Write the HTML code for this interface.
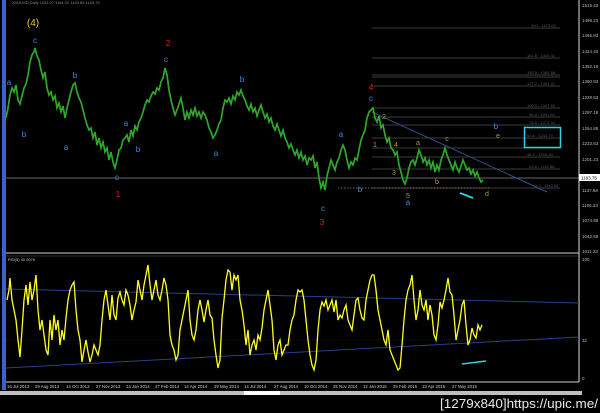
<!DOCTYPE html>
<html><head><meta charset="utf-8"><style>
html,body{margin:0;padding:0;background:#000;width:600px;height:413px;overflow:hidden}
svg{display:block}
text{font-family:"Liberation Sans",sans-serif}
</style></head><body>
<svg width="600" height="413" viewBox="0 0 600 413">
<rect width="600" height="413" fill="#000"/>
<rect x="2" y="0" width="4" height="390" fill="#3a63c8"/>
<line x1="579" y1="0" x2="579" y2="382" stroke="#ddd" stroke-width="1"/>
<g fill="#bbb" font-size="4.5">
<text x="582" y="7">1515.40</text><text x="582" y="22">1498.23</text><text x="582" y="37">1465.83</text>
<text x="582" y="53">1424.40</text><text x="582" y="68">1392.18</text><text x="582" y="83">1360.83</text>
<text x="582" y="99">1328.53</text><text x="582" y="114">1297.18</text><text x="582" y="130">1264.88</text>
<text x="582" y="145">1233.53</text><text x="582" y="161">1201.23</text><text x="582" y="192">1137.58</text>
<text x="582" y="207">1106.23</text><text x="582" y="222">1074.88</text><text x="582" y="238">1042.58</text><text x="582" y="253">1011.23</text>
<text x="582" y="261">100</text><text x="582" y="342">32</text><text x="582" y="380">0</text>
</g>
<rect x="579" y="174" width="21" height="7" fill="#fff"/>
<text x="581" y="179.5" font-size="4.5" fill="#000">1163.75</text>
<text x="12" y="4" font-size="4" fill="#888">XAUUSD,Daily 1163.07 1164.02 1163.65 1163.75</text>
<g stroke="#777" stroke-width="0.6">
<line x1="372" y1="28" x2="560" y2="28"/><line x1="372" y1="58" x2="560" y2="58"/>
<line x1="372" y1="75" x2="560" y2="75"/><line x1="372" y1="77" x2="560" y2="77"/>
<line x1="372" y1="86" x2="560" y2="86"/><line x1="372" y1="108" x2="560" y2="108"/>
<line x1="372" y1="117" x2="560" y2="117"/><line x1="372" y1="125" x2="560" y2="125"/>
<line x1="372" y1="138" x2="560" y2="138"/><line x1="372" y1="148" x2="560" y2="148"/>
<line x1="372" y1="157" x2="560" y2="157"/><line x1="372" y1="169" x2="560" y2="169"/>
<line x1="372" y1="188" x2="560" y2="188"/>
</g>
<g fill="#556" font-size="4">
<text x="531" y="27">200 - 1473.02</text><text x="527" y="57">161.8 - 1405.02</text>
<text x="527" y="74">150.0 - 1385.58</text><text x="527" y="85">127.2 - 1351.47</text>
<text x="527" y="107">100.0 - 1307.53</text><text x="529" y="116">90.4 - 1291.65</text>
<text x="529" y="124">78.6 - 1272.30</text><text x="527" y="137">61.8 - 1244.70</text>
<text x="527" y="156">38.2 - 1205.80</text><text x="529" y="168">23.6 - 1181.88</text><text x="535" y="187">0.0 - 1143.33</text>
</g>
<rect x="524.5" y="127.5" width="36" height="20" fill="none" stroke="#2cd3e0" stroke-width="1.5"/>
<line x1="6" y1="178" x2="579" y2="178" stroke="#888" stroke-width="0.8"/>
<line x1="338" y1="188" x2="490" y2="188" stroke="#a08a40" stroke-width="0.7" stroke-dasharray="1.5,1.5"/>
<line x1="372" y1="112" x2="547" y2="192" stroke="#34508a" stroke-width="1"/>
<polyline fill="none" stroke="#2fa82a" stroke-width="1.7" points="6,118 8,108 10,95 12,88 14,92 16,85 18,100 20,104 22,96 24,88 26,84 28,75 30,62 32,55 34,52 35,48 37,56 39,60 41,70 43,78 45,72 47,88 49,95 51,92 53,100 55,96 57,108 59,103 61,112 63,106 65,118 67,108 69,100 71,92 73,85 75,83 77,92 79,98 81,102 83,110 85,118 87,125 89,130 91,128 93,138 95,132 97,145 99,138 101,148 103,142 105,152 107,148 109,160 111,152 113,162 115,168 117,160 119,150 121,148 123,140 125,138 127,135 129,142 131,130 133,136 135,126 137,130 139,122 141,118 143,112 145,105 147,100 149,102 151,96 153,92 155,94 157,88 159,90 161,82 163,78 165,68 167,75 169,90 171,100 173,108 175,115 177,110 179,104 181,98 183,108 185,120 187,112 189,118 191,110 193,115 195,108 197,116 199,112 201,118 203,112 205,115 207,120 209,128 211,132 213,138 215,135 217,130 219,124 221,120 223,108 225,100 227,102 229,98 231,104 233,96 235,100 237,92 239,95 241,90 243,96 245,100 247,106 249,110 251,104 253,112 255,108 257,116 259,110 261,105 263,112 265,118 267,114 269,122 271,118 273,126 275,130 277,124 279,130 281,136 283,130 285,138 287,142 289,148 291,144 293,150 295,155 297,150 299,158 301,152 303,160 305,156 307,165 309,158 311,160 313,156 315,168 317,162 319,178 321,188 323,182 325,190 327,176 329,168 331,160 333,165 335,170 337,162 339,158 341,150 343,145 345,150 347,160 349,168 351,162 353,165 355,158 357,160 359,150 361,140 363,135 365,130 367,118 369,112 371,110 373,108 375,118 377,122 379,116 381,128 383,125 385,135 387,142 389,138 391,148 393,150 395,155 397,152 399,165 401,172 403,180 405,184 407,178 409,168 411,162 413,160 415,165 417,158 419,150 421,155 423,162 425,158 427,165 429,160 431,168 433,162 435,172 437,165 439,170 441,160 443,155 445,148 447,155 449,160 451,165 453,170 455,162 457,168 459,172 461,166 463,160 465,165 467,170 469,168 471,174 473,170 475,176 477,172 479,178 481,182 483,180"/>
<g font-size="8" fill="#3b8ce0" text-anchor="middle">
<text x="9" y="85">a</text><text x="35" y="43">c</text><text x="24" y="137">b</text>
<text x="75" y="78">b</text><text x="66" y="150">a</text><text x="117" y="180">c</text>
<text x="126" y="126">a</text><text x="138" y="152">b</text><text x="166" y="62">c</text>
<text x="216" y="156">a</text><text x="242" y="82">b</text><text x="341" y="137">a</text>
<text x="360" y="192">b</text><text x="371" y="101">c</text><text x="323" y="211">c</text>
<text x="408" y="205">a</text><text x="496" y="129">b</text>
</g>
<g font-size="8" fill="#e02020" text-anchor="middle">
<text x="118" y="197">1</text><text x="168" y="46">2</text><text x="322" y="225">3</text><text x="371" y="90">4</text>
</g>
<text x="33" y="26" font-size="10" fill="#e0d020" text-anchor="middle">(4)</text>
<g font-size="7" fill="#a8983a" text-anchor="middle">
<text x="384" y="119">2</text><text x="375" y="147">1</text><text x="396" y="147">4</text>
<text x="394" y="175">3</text><text x="408" y="198">5</text><text x="418" y="145">a</text>
<text x="437" y="184">b</text><text x="447" y="141">c</text><text x="487" y="196">d</text><text x="498" y="138">e</text>
</g>
<line x1="460" y1="193" x2="473" y2="198" stroke="#2cd3e0" stroke-width="1.8"/>
<line x1="6" y1="253" x2="579" y2="253" stroke="#ccc" stroke-width="1"/>
<line x1="6" y1="256" x2="579" y2="256" stroke="#555" stroke-width="0.6"/>
<text x="8" y="261" font-size="4" fill="#ccc">RSI(5) 40.9076</text>
<line x1="6" y1="289" x2="579" y2="303" stroke="#27408a" stroke-width="1"/>
<line x1="6" y1="368" x2="579" y2="337" stroke="#27408a" stroke-width="1"/>
<line x1="6" y1="340" x2="579" y2="340" stroke="#333" stroke-width="0.6" stroke-dasharray="1,1"/>
<polyline fill="none" stroke="#ffff20" stroke-width="1.3" points="7,300 9,290 10,278 12,300 14,310 16,320 18,340 20,357 22,330 24,300 26,285 28,305 30,282 32,300 34,290 36,275 38,310 40,330 42,320 44,335 46,350 48,355 50,320 52,340 54,315 56,330 58,320 60,345 62,330 64,340 66,318 68,300 70,290 72,285 74,282 76,310 78,330 80,340 82,362 84,350 86,340 88,352 90,362 92,355 94,345 96,350 98,355 100,345 102,320 104,300 106,290 108,305 110,320 112,295 114,315 116,320 118,298 120,292 122,300 124,305 126,290 128,295 130,305 132,320 134,310 136,302 138,280 140,290 142,300 144,285 146,275 148,265 150,285 152,300 154,290 156,280 158,295 160,300 162,290 164,278 166,285 168,300 170,335 172,345 174,350 176,360 178,355 180,330 182,320 184,310 186,300 188,290 190,320 192,335 194,340 196,330 198,310 200,300 202,310 204,322 206,310 208,300 210,315 212,318 214,340 216,355 218,368 220,360 222,318 224,300 226,280 228,270 230,272 232,290 234,275 236,280 238,275 240,300 242,310 244,325 246,345 248,330 250,355 252,345 254,340 256,350 258,335 260,340 262,328 264,310 266,300 268,290 270,305 272,320 274,350 276,360 278,345 280,340 282,355 284,350 286,345 288,345 290,330 292,320 294,315 296,300 298,290 300,292 302,290 304,300 306,320 308,340 310,355 312,365 314,370 316,360 318,330 320,310 322,302 324,306 326,300 328,310 330,305 332,300 334,312 336,300 338,320 340,315 342,318 344,310 346,305 348,320 350,325 352,330 354,315 356,300 358,298 360,310 362,318 364,320 366,300 368,290 370,280 372,275 374,275 376,290 378,310 380,320 382,330 384,340 386,345 388,330 390,350 392,355 394,360 396,365 398,370 400,368 402,345 404,320 406,300 408,290 410,285 412,275 414,300 416,320 418,310 420,290 422,305 424,310 426,300 428,320 430,305 432,315 434,335 436,340 438,325 440,302 442,308 444,300 446,290 448,278 450,292 452,295 454,315 456,340 458,330 460,320 462,305 464,300 466,325 468,345 470,340 472,328 474,335 476,338 478,325 480,330 482,325"/>
<line x1="462" y1="364" x2="486" y2="361" stroke="#2cd3e0" stroke-width="1.6"/>
<line x1="6" y1="382" x2="579" y2="382" stroke="#ccc" stroke-width="1"/>
<g fill="#ccc" font-size="4.3">
<text x="7" y="388">16 Jul 2013</text><text x="35" y="388">29 Aug 2013</text><text x="66" y="388">14 Oct 2013</text>
<text x="96" y="388">27 Nov 2013</text><text x="126" y="388">14 Jan 2014</text><text x="155" y="388">27 Feb 2014</text>
<text x="184" y="388">14 Apr 2014</text><text x="214" y="388">29 May 2014</text><text x="244" y="388">14 Jul 2014</text>
<text x="274" y="388">27 Aug 2014</text><text x="304" y="388">10 Oct 2014</text><text x="333" y="388">25 Nov 2014</text>
<text x="363" y="388">12 Jan 2015</text><text x="393" y="388">25 Feb 2015</text><text x="422" y="388">13 Apr 2015</text><text x="452" y="388">27 May 2015</text>
</g>
<rect x="0" y="391" width="582" height="4" fill="#bfbfbf"/>
<rect x="244" y="391" width="36" height="4" fill="#fff"/>
<text x="598" y="408" font-size="13" fill="#e8e8e8" text-anchor="end" textLength="158" lengthAdjust="spacingAndGlyphs">[1279x840]https://upic.me/</text>
</svg>
</body></html>
